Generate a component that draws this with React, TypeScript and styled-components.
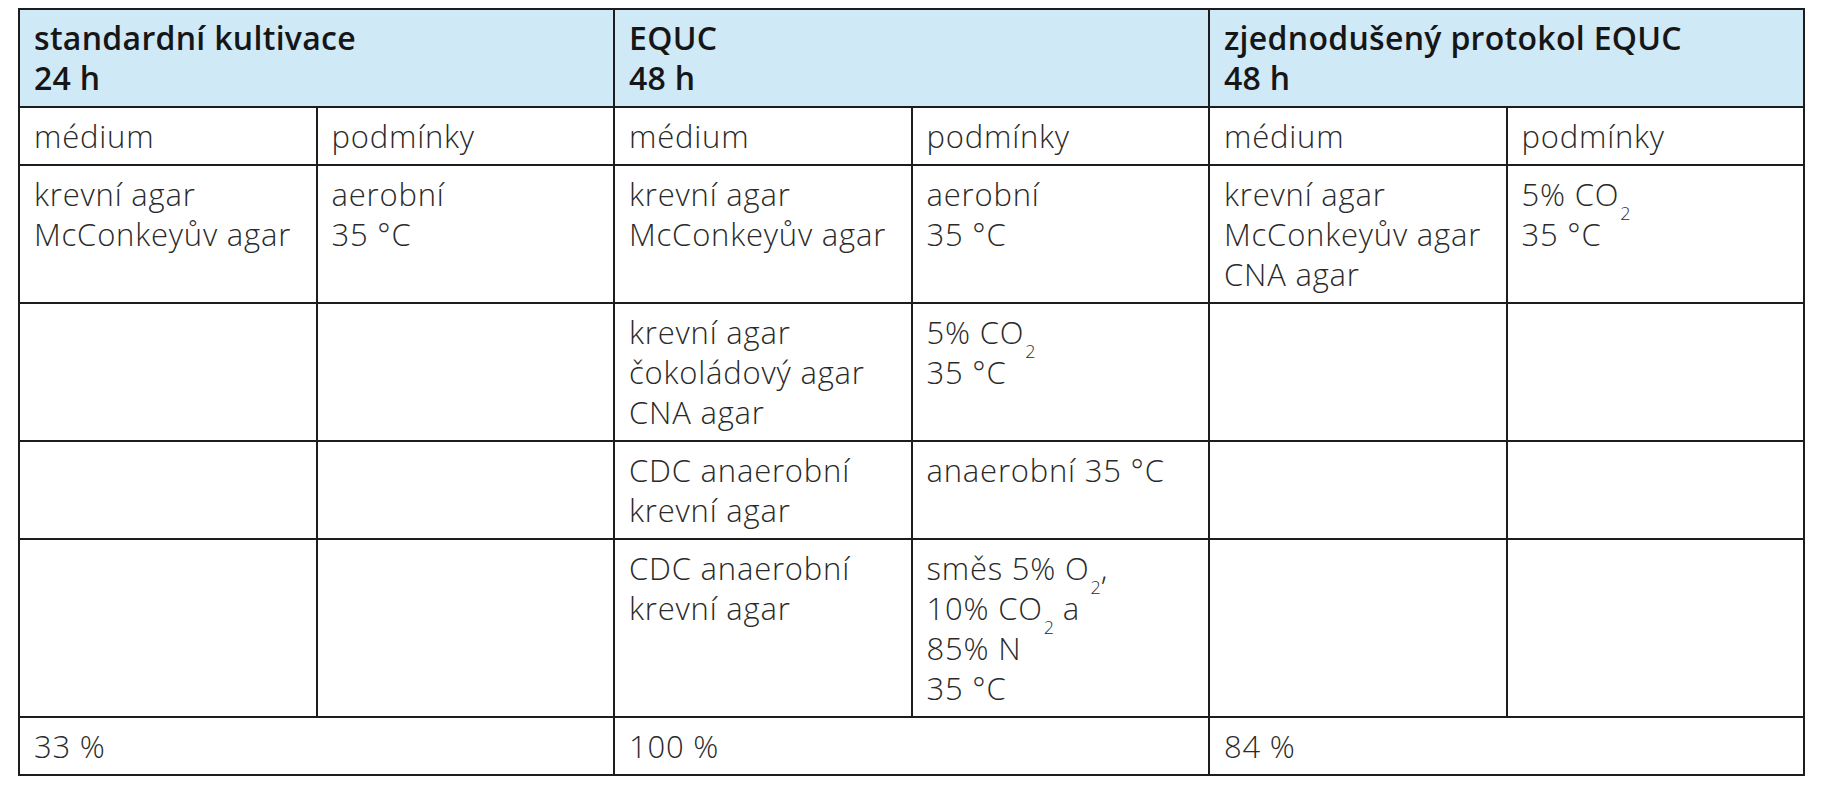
import React from "react";
import styled, { createGlobalStyle } from "styled-components";

const GlobalStyle = createGlobalStyle`
  html, body {
    margin: 0;
    padding: 0;
    background: #ffffff;
  }
  body {
    margin: 8px;
    font-family: "Open Sans", "Noto Sans", "Liberation Sans", sans-serif;
  }
`;

const Table = styled.table`
  margin-left: 10px;
  width: 1787px;
  table-layout: fixed;
  border-collapse: separate;
  border-spacing: 0;
  border-top: 2px solid #1d1d1d;
  border-left: 2px solid #1d1d1d;
`;

const Cell = styled.td<{ $head?: boolean }>`
  border-right: 2px solid #1d1d1d;
  border-bottom: 2px solid #1d1d1d;
  padding: 8px 8px 8px 14px;
  vertical-align: top;
  font-size: ${(p) => (p.$head ? "32px" : "31px")};
  line-height: 40px;
  font-weight: ${(p) => (p.$head ? 600 : 350)};
  color: ${(p) => (p.$head ? "#161616" : "#2a2a2a")};
  background: ${(p) => (p.$head ? "#cfe9f7" : "#ffffff")};
  letter-spacing: ${(p) => (p.$head ? "0.3px" : "0.8px")};
`;

const Line = styled.div`
  white-space: nowrap;
`;

const Sub = styled.sub`
  font-size: 18px;
  line-height: 0;
  vertical-align: -14px;
  margin-left: 1px;
  letter-spacing: 0;
`;

type Content = React.ReactNode[];

const co2 = (
  <>
    5% CO<Sub>2</Sub>
  </>
);

const rows: { cells: { lines: Content }[] }[] = [
  {
    cells: [
      { lines: ["krevní agar", "McConkeyův agar"] },
      { lines: ["aerobní", "35 °C"] },
      { lines: ["krevní agar", "McConkeyův agar"] },
      { lines: ["aerobní", "35 °C"] },
      { lines: ["krevní agar", "McConkeyův agar", "CNA agar"] },
      { lines: [co2, "35 °C"] },
    ],
  },
  {
    cells: [
      { lines: [] },
      { lines: [] },
      { lines: ["krevní agar", "čokoládový agar", "CNA agar"] },
      { lines: [co2, "35 °C"] },
      { lines: [] },
      { lines: [] },
    ],
  },
  {
    cells: [
      { lines: [] },
      { lines: [] },
      { lines: ["CDC anaerobní", "krevní agar"] },
      { lines: ["anaerobní 35 °C"] },
      { lines: [] },
      { lines: [] },
    ],
  },
  {
    cells: [
      { lines: [] },
      { lines: [] },
      { lines: ["CDC anaerobní", "krevní agar"] },
      {
        lines: [
          <>
            směs 5% O<Sub>2</Sub>,
          </>,
          <>
            10% CO<Sub>2</Sub> a
          </>,
          "85% N",
          "35 °C",
        ],
      },
      { lines: [] },
      { lines: [] },
    ],
  },
];

const groups = [
  { title: "standardní kultivace", time: "24 h", result: "33 %" },
  { title: "EQUC", time: "48 h", result: "100 %" },
  { title: "zjednodušený protokol EQUC", time: "48 h", result: "84 %" },
];

export default function App() {
  return (
    <>
      <GlobalStyle />
      <Table>
        <colgroup>
          {Array.from({ length: 6 }).map((_, i) => (
            <col key={i} />
          ))}
        </colgroup>
        <tbody>
          <tr>
            {groups.map((g) => (
              <Cell key={g.title} $head colSpan={2}>
                <Line>{g.title}</Line>
                <Line>{g.time}</Line>
              </Cell>
            ))}
          </tr>
          <tr>
            {groups.map((g) => (
              <React.Fragment key={g.title}>
                <Cell>médium</Cell>
                <Cell>podmínky</Cell>
              </React.Fragment>
            ))}
          </tr>
          {rows.map((r, ri) => (
            <tr key={ri}>
              {r.cells.map((c, ci) => (
                <Cell key={ci}>
                  {c.lines.map((l, li) => (
                    <Line key={li}>{l}</Line>
                  ))}
                </Cell>
              ))}
            </tr>
          ))}
          <tr>
            {groups.map((g) => (
              <Cell key={g.title} colSpan={2}>
                {g.result}
              </Cell>
            ))}
          </tr>
        </tbody>
      </Table>
    </>
  );
}
